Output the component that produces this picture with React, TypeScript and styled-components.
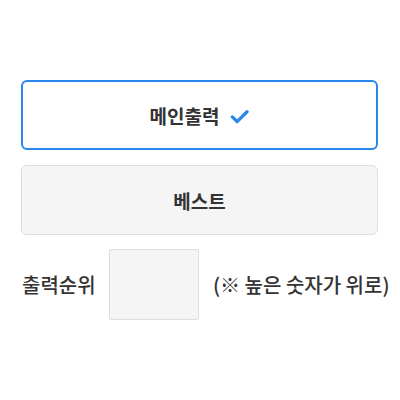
import styled, { createGlobalStyle } from 'styled-components';

const GlobalStyle = createGlobalStyle`
  body {
    margin: 0;
    background: #fff;
    font-family: "Noto Sans CJK KR", "Noto Sans", sans-serif;
    color: #333;
  }
`;

const Wrapper = styled.div`
  width: 357px;
  padding: 80px 0 0 21px;
  display: flex;
  flex-direction: column;
`;

const OptionButton = styled.button<{ selected?: boolean }>`
  box-sizing: border-box;
  height: 70px;
  width: 100%;
  display: flex;
  align-items: center;
  justify-content: center;
  gap: 11px;
  border-radius: 6px;
  border: ${p => (p.selected ? '2px solid #2b87ec' : '1px solid #dedede')};
  background: ${p => (p.selected ? '#fff' : '#f5f5f5')};
  font-family: inherit;
  font-size: 19px;
  font-weight: 700;
  color: #333;
  padding: 0;
  margin-bottom: 15px;
  cursor: pointer;
`;

const Check = styled.svg`
  width: 19px;
  height: 19px;
  margin-top: 2px;
`;

const OrderRow = styled.div`
  display: flex;
  align-items: center;
  margin-top: -1px;
  font-size: 20px;
  font-weight: 500;
`;

const Label = styled.span`
  flex: 0 0 88px;
  padding-left: 1px;
  box-sizing: border-box;
  white-space: nowrap;
`;

const OrderInput = styled.input`
  box-sizing: border-box;
  flex: 0 0 90px;
  width: 90px;
  height: 71px;
  border: 1px solid #dedede;
  border-radius: 2px;
  background: #f5f5f5;
  margin: 0 14px 0 0;
`;

const Hint = styled.span`
  flex-shrink: 0;
  white-space: nowrap;
`;

export default function App() {
  return (
    <>
      <GlobalStyle />
      <Wrapper>
        <OptionButton selected>
          메인출력
          <Check viewBox="0 0 24 24">
            <path d="M3 12.5l6 6L21.5 6" fill="none" stroke="#2b87ec" strokeWidth="4.2" strokeLinecap="round" strokeLinejoin="round" />
          </Check>
        </OptionButton>
        <OptionButton>베스트</OptionButton>
        <OrderRow>
          <Label>출력순위</Label>
          <OrderInput type="text" />
          <Hint>(※ 높은 숫자가 위로)</Hint>
        </OrderRow>
      </Wrapper>
    </>
  );
}
